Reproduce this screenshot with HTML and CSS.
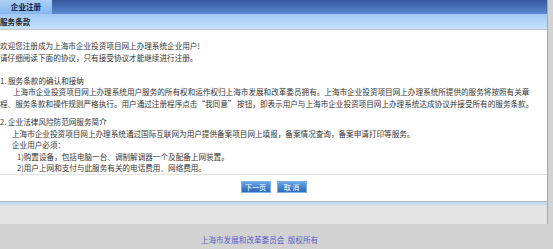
FILE: index.html
```html
<html>
	<head>
		<title>企业注册 - 服务条款</title>
		<meta charset="utf-8">
		<link rel="stylesheet" href="styles.css">
	</head>
	<body>
		<div id="page">
			<div id="topbar">
				<div class="tab">企业注册</div>
			</div>
			<div id="subbar">服务条款</div>

			<div id="content">
				<div id="terms">
					<div class="intro">
						<p>欢迎您注册成为上海市企业投资项目网上办理系统企业用户!</p>
						<p>请仔细阅读下面的协议，只有接受协议才能继续进行注册。</p>
					</div>

					<div class="section first">
						<p>1. 服务条款的确认和接纳</p>
						<p class="para">上海市企业投资项目网上办理系统用户服务的所有权和运作权归上海市发展和改革委员拥有。上海市企业投资项目网上办理系统所提供的服务将按照有关章程、服务条款和操作规则严格执行。用户通过注册程序点击“我同意” 按钮，即表示用户与上海市企业投资项目网上办理系统达成协议并接受所有的服务条款。</p>
					</div>

					<div class="section">
						<p>2. 企业法律风险防范网服务简介</p>
						<p class="indent">上海市企业投资项目网上办理系统通过国际互联网为用户提供备案项目网上填报，备案情况查询，备案申请打印等服务。</p>
						<p class="indent">企业用户必须：</p>
						<p class="item">1)购置设备，包括电脑一台、调制解调器一个及配备上网装置。</p>
						<p class="item">2)用户上网和支付与此服务有关的电话费用、网络费用。</p>
					</div>
				</div>

				<div id="actions">
					<button class="btn">下一页</button>
					<button class="btn">取 消</button>
				</div>
			</div>

			<div id="band"></div>
		</div>

		<div id="footer">上海市发展和改革委员会&nbsp;&nbsp;版权所有</div>
	</body>
</html>
```

FILE: styles.css
```css
* {
	margin: 0;
	padding: 0;
}

body {
	background: #d2d2d2;
	color: #333;
	font-family: "Noto Sans CJK SC", "Liberation Sans", sans-serif;
	font-size: 7.6px;
	line-height: 11.5px;
}

#page {
	width: 547px;
	border-right: 1px solid #a8a8a8;
}

#topbar {
	height: 14px;
	display: flex;
	background: linear-gradient(#37589e, #5d88d0);
}

#topbar .tab {
	width: 52px;
	line-height: 14px;
	text-align: center;
	font-weight: bold;
	color: #0e2150;
	background: linear-gradient(#acd1f6, #86b7ec);
}

#subbar {
	height: 15px;
	line-height: 15px;
	font-weight: bold;
	color: #1c1c1c;
	background: linear-gradient(#a0c9f4, #c7e4fe);
}

#content {
	background: white;
	border-top: 1px solid #c4c4c4;
	border-bottom: 1px solid #b2b2b2;
}

#terms {
	padding: 10px 3px 0 0;
}

.section.first {
	margin-top: 11.5px;
}

.section {
	margin-top: 7px;
}

.para {
	text-indent: 13px;
}

.indent {
	padding-left: 12px;
}

.item {
	padding-left: 17px;
}

#actions {
	border-top: 1px solid #e2e2e2;
	padding: 6px 0 8px;
	display: flex;
	justify-content: center;
	gap: 6px;
}

.btn {
	width: 30px;
	height: 12px;
	border: 1px solid #7fb0e6;
	background: linear-gradient(#65a3e6, #2c69bd);
	color: white;
	font-family: "Noto Sans CJK SC", sans-serif;
	font-size: 7px;
	line-height: 10px;
}

#band {
	height: 19px;
	border-top: 3px solid #c3dcf6;
	background: #e3e3e3;
}

#footer {
	padding: 10px 34px 0 0;
	text-align: center;
	color: #5a5ec8;
}
```
